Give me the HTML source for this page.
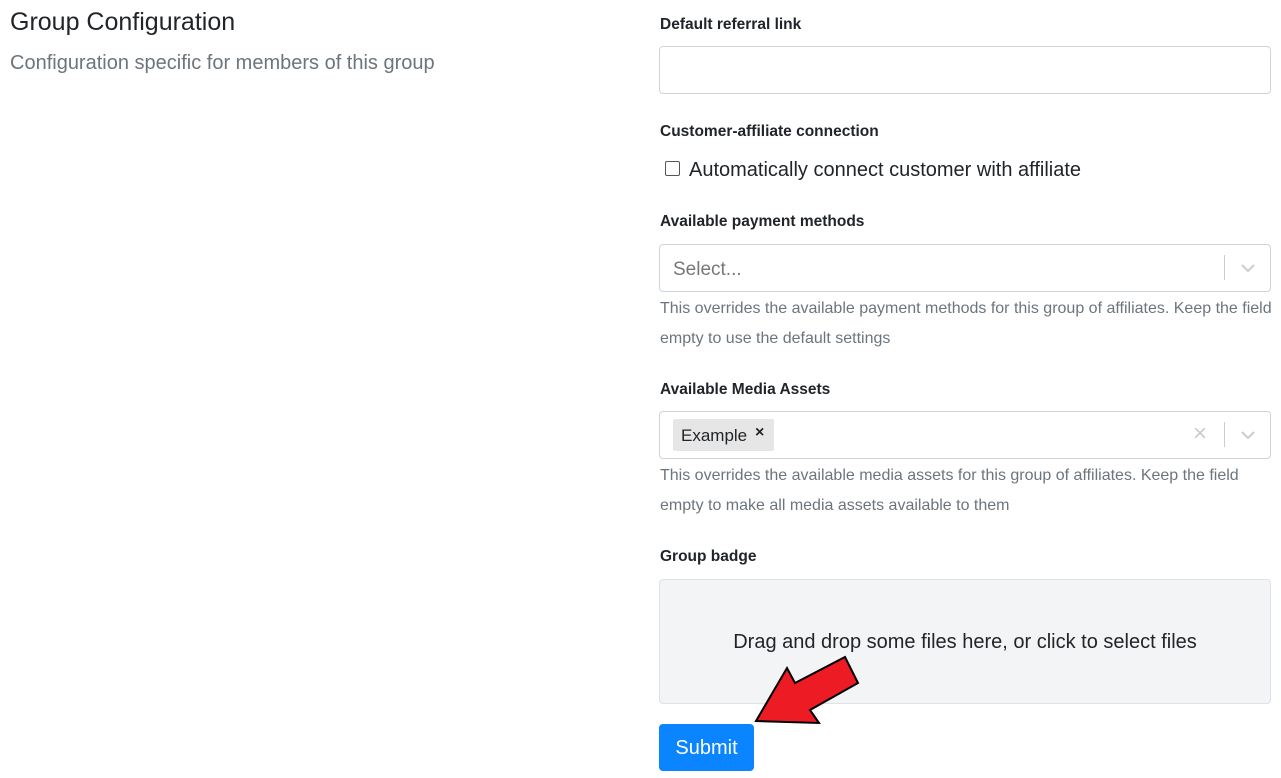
<!DOCTYPE html>
<html><head><style>
body{margin:0;width:1281px;height:778px;background:#fff;font-family:"Liberation Sans",sans-serif;color:#212529;position:relative;overflow:hidden}
.a{position:absolute}
h1{position:absolute;left:10px;top:8px;margin:0;font-weight:400;font-size:25px}
.sub{left:10px;top:52px;font-size:20px;color:#6c757d}
.lbl{font-weight:700;font-size:15.5px;left:660px}
.box{left:659px;width:610px;border:1px solid #ced4da;border-radius:4px;background:#fff}
.help{left:660px;font-size:16px;color:#6c757d;line-height:30px;width:618px}
</style></head><body>
<h1>Group Configuration</h1>
<div class="a sub">Configuration specific for members of this group</div>
<div class="a lbl" style="top:16px">Default referral link</div>
<div class="a box" style="top:46px;height:46px"></div>
<div class="a lbl" style="top:123px">Customer-affiliate connection</div>
<div class="a" style="left:665px;top:161px;width:13px;height:13px;border:1px solid #555;border-radius:2px"></div>
<div class="a" style="left:689px;top:159px;font-size:20px">Automatically connect customer with affiliate</div>
<div class="a lbl" style="top:213px">Available payment methods</div>
<div class="a box" style="top:244px;height:46px"><span class="a" style="left:13px;top:14px;font-size:19px;color:#777">Select...</span>
<div class="a" style="left:564px;top:10px;width:1px;height:25px;background:#ccc"></div>
<svg class="a" style="left:579px;top:16px" width="18" height="14"><path d="M3 4l6 6 6-6" stroke="#ccc" stroke-width="2" fill="none"/></svg></div>
<div class="a help" style="top:294px">This overrides the available payment methods for this group of affiliates. Keep the field empty to use the default settings</div>
<div class="a lbl" style="top:381px">Available Media Assets</div>
<div class="a box" style="top:411px;height:46px">
<div class="a" style="left:13px;top:7px;width:101px;height:32px;background:#e6e6e6;border-radius:2px"><span class="a" style="left:8px;top:7px;font-size:17px">Example</span><span class="a" style="left:82px;top:5px;font-size:16px;font-weight:700">×</span></div>
<span class="a" style="left:533px;top:8px;font-size:24px;color:#ccc">×</span>
<div class="a" style="left:564px;top:10px;width:1px;height:25px;background:#ccc"></div>
<svg class="a" style="left:579px;top:16px" width="18" height="14"><path d="M3 4l6 6 6-6" stroke="#ccc" stroke-width="2" fill="none"/></svg></div>
<div class="a help" style="top:461px">This overrides the available media assets for this group of affiliates. Keep the field empty to make all media assets available to them</div>
<div class="a lbl" style="top:548px">Group badge</div>
<div class="a box" style="top:579px;height:123px;background:#f3f4f6;border-color:#dee2e6"><div style="text-align:center;margin-top:51px;font-size:20px">Drag and drop some files here, or click to select files</div></div>
<div class="a" style="left:659px;top:724px;width:95px;height:47px;background:#0a84ff;border-radius:4px;color:#fff;font-size:20px;text-align:center;line-height:49px">Submit</div>
<svg class="a" style="left:0;top:0" width="1281" height="778"><polygon points="756,721 787,668 795,683 845,657 858,683 810,710 819,723" fill="#ed1c24" stroke="#000" stroke-width="2" stroke-linejoin="miter"/></svg>
</body></html>
